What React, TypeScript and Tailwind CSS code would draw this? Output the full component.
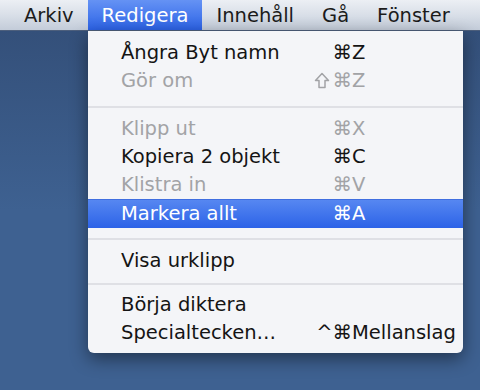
import { Fragment } from 'react';

type Item =
  | { kind: 'sep'; h: string; line: string }
  | { kind: 'item'; label: string; mods?: string; key?: string; shift?: boolean; disabled?: boolean; active?: boolean };

const menuBar = ['Arkiv', 'Redigera', 'Innehåll', 'Gå', 'Fönster'];

const items: Item[] = [
  { kind: 'item', label: 'Ångra Byt namn', mods: '⌘', key: 'Z' },
  { kind: 'item', label: 'Gör om', mods: '⌘', key: 'Z', shift: true, disabled: true },
  { kind: 'sep', h: 'h-[20px]', line: 'pt-[11px]' },
  { kind: 'item', label: 'Klipp ut', mods: '⌘', key: 'X', disabled: true },
  { kind: 'item', label: 'Kopiera 2 objekt', mods: '⌘', key: 'C' },
  { kind: 'item', label: 'Klistra in', mods: '⌘', key: 'V', disabled: true },
  { kind: 'item', label: 'Markera allt', mods: '⌘', key: 'A', active: true },
  { kind: 'sep', h: 'h-[19px]', line: 'pt-[10px]' },
  { kind: 'item', label: 'Visa urklipp' },
  { kind: 'sep', h: 'h-[16px]', line: 'pt-[8px]' },
  { kind: 'item', label: 'Börja diktera' },
  { kind: 'item', label: 'Specialtecken…', mods: '^⌘', key: 'Mellanslag' },
];

// hollow shift arrow, as drawn in the mac menu
function ShiftGlyph() {
  return (
    <svg width="16" height="17" viewBox="0 0 16 17" className="inline-block mr-[3px] mb-[2px] align-middle">
      <path d="M8 1.5 L14.5 8.5 H11 V15.5 H5 V8.5 H1.5 Z" fill="none" stroke="currentColor" strokeWidth="1.5" strokeLinejoin="round" />
    </svg>
  );
}

export default function App() {
  return (
    <div
      className="w-[480px] h-[390px] overflow-hidden bg-[#3e6191] flex flex-col"
      style={{ fontFamily: '"DejaVu Sans", "Liberation Sans", sans-serif' }}
    >
      {/* menu bar */}
      <div className="h-[31px] shrink-0 flex items-stretch pl-[10px] bg-gradient-to-b from-[#eceff4] via-[#d9dfe8] to-[#c3ccd9] border-b border-[#4d5f7c] text-[19.5px] text-[#1b1b1b]">
        {menuBar.map((m) => (
          <div
            key={m}
            className={
              m === 'Redigera'
                ? 'px-[14px] pt-[1px] flex items-center bg-gradient-to-b from-[#6592f4] to-[#2c62e6] text-white'
                : 'px-[14px] pt-[1px] flex items-center'
            }
          >
            {m}
          </div>
        ))}
      </div>

      <div className="flex-1 bg-gradient-to-b from-[#34507a] via-[#3e6191] to-[#3e6191]">
        {/* dropdown */}
        <div className="ml-[88px] w-[375px] bg-[#f4f5f8] rounded-b-[6px] pt-[8px] pb-[6px] shadow-[0_6px_18px_rgba(0,0,0,0.45)] text-[19.5px]">
          {items.map((it, i) => (
            <Fragment key={i}>
              {it.kind === 'sep' ? (
                <div className={`${it.h} ${it.line}`}>
                  <div className="h-[2px] bg-[#dfe0e5]" />
                </div>
              ) : (
                <div
                  className={
                    it.active
                      ? 'h-[29px] flex items-center bg-gradient-to-b from-[#5687f1] to-[#2c62e7] border-t border-[#3f6ee0] text-white'
                      : it.disabled
                        ? 'h-[28px] flex items-center text-[#a2a3a6]'
                        : 'h-[28px] flex items-center text-[#141414]'
                  }
                >
                  <span className="pl-[33px] flex-1 whitespace-nowrap">{it.label}</span>
                  <span className="w-[60px] text-right whitespace-nowrap">
                    {it.shift && <ShiftGlyph />}
                    {it.mods ?? ''}
                  </span>
                  <span className="w-[111px] whitespace-nowrap">{it.key ?? ''}</span>
                </div>
              )}
            </Fragment>
          ))}
        </div>
      </div>
    </div>
  );
}
